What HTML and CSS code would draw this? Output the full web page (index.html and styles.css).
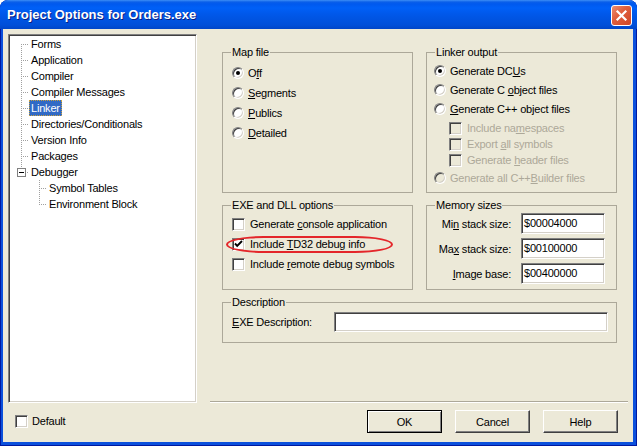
FILE: index.html
```html
<!DOCTYPE html>
<html lang="en">
<head>
  <meta charset="UTF-8">
  <title>Project Options for Orders.exe</title>
  <link rel="stylesheet" href="styles.css">
</head>
<body>
  <div class="window">
    <div class="titlebar">
      <span class="title">Project Options for Orders.exe</span>
      <span class="close">
        <svg width="13" height="13" viewBox="0 0 13 13"><path d="M2.5 2.5 L10.5 10.5 M10.5 2.5 L2.5 10.5" stroke="#fff" stroke-width="2.2" stroke-linecap="square"/></svg>
      </span>
    </div>
    <div class="client">
      <div class="main">
        <div class="tree">
          <div class="node"><span class="branch first"></span><span class="label">Forms</span></div>
          <div class="node"><span class="branch"></span><span class="label">Application</span></div>
          <div class="node"><span class="branch"></span><span class="label">Compiler</span></div>
          <div class="node"><span class="branch"></span><span class="label">Compiler Messages</span></div>
          <div class="node"><span class="branch"></span><span class="label selected">Linker</span></div>
          <div class="node"><span class="branch"></span><span class="label">Directories/Conditionals</span></div>
          <div class="node"><span class="branch"></span><span class="label">Version Info</span></div>
          <div class="node"><span class="branch"></span><span class="label">Packages</span></div>
          <div class="node"><span class="branch last open"><span class="toggle"></span></span><span class="label">Debugger</span></div>
          <div class="node"><span class="branch child"></span><span class="label">Symbol Tables</span></div>
          <div class="node"><span class="branch child last"></span><span class="label">Environment Block</span></div>
        </div>

        <div class="page">
          <div class="row">
            <fieldset class="group top map">
              <legend>Map file</legend>
              <div class="opt"><span class="radio on"></span><span>O<u>f</u>f</span></div>
              <div class="opt"><span class="radio"></span><span><u>S</u>egments</span></div>
              <div class="opt"><span class="radio"></span><span><u>P</u>ublics</span></div>
              <div class="opt"><span class="radio"></span><span><u>D</u>etailed</span></div>
            </fieldset>
            <fieldset class="group top linker">
              <legend>Linker output</legend>
              <div class="opt"><span class="radio on"></span><span>Generate DC<u>U</u>s</span></div>
              <div class="opt"><span class="radio"></span><span>Generate C <u>o</u>bject files</span></div>
              <div class="opt"><span class="radio"></span><span><u>G</u>enerate C++ object files</span></div>
              <div class="sub">
                <div class="opt small disabled"><span class="check"></span><span>Include na<u>m</u>espaces</span></div>
                <div class="opt small disabled"><span class="check"></span><span>Export <u>a</u>ll symbols</span></div>
                <div class="opt small disabled"><span class="check"></span><span>Generate <u>h</u>eader files</span></div>
              </div>
              <div class="opt disabled"><span class="radio"></span><span>Generate all C++<u>B</u>uilder files</span></div>
            </fieldset>
          </div>

          <div class="row">
            <fieldset class="group mid exe">
              <legend>EXE and DLL options</legend>
              <div class="opt"><span class="check"></span><span>Generate <u>c</u>onsole application</span></div>
              <div class="opt marked"><span class="check">
                <svg width="9" height="9" viewBox="0 0 9 9"><path d="M1 3.5 L3.2 5.8 L8 1" fill="none" stroke="#000" stroke-width="1.9"/></svg>
              </span><span>Include <u>T</u>D32 debug info</span></div>
              <div class="opt"><span class="check"></span><span>Include <u>r</u>emote debug symbols</span></div>
            </fieldset>
            <fieldset class="group mid memory">
              <legend>Memory sizes</legend>
              <div class="field"><span class="name">Mi<u>n</u> stack size:</span><span class="edit">$00004000</span></div>
              <div class="field"><span class="name">Ma<u>x</u> stack size:</span><span class="edit">$00100000</span></div>
              <div class="field"><span class="name"><u>I</u>mage base:</span><span class="edit">$00400000</span></div>
            </fieldset>
          </div>

          <fieldset class="group desc">
            <legend>Description</legend>
            <div class="field"><span class="name"><u>E</u>XE Description:</span><span class="edit wide"></span></div>
          </fieldset>
        </div>
      </div>

      <div class="footer">
        <div class="opt default"><span class="check"></span><span>Default</span></div>
        <div class="buttons">
          <span class="btn primary">OK</span>
          <span class="btn">Cancel</span>
          <span class="btn">Help</span>
        </div>
      </div>
    </div>
  </div>
</body>
</html>
```

FILE: styles.css
```css
body {
  margin: 0;
  font: 11px "Liberation Sans", Arial, sans-serif;
  letter-spacing: -0.2px;
  color: #000;
}
.window {
  width: 637px;
  height: 446px;
  box-sizing: border-box;
  display: flex;
  flex-direction: column;
  background: #0b50dc;
  border-radius: 8px 8px 0 0;
  box-shadow: inset 0 0 0 1px #0019a0;
}
.titlebar {
  height: 29px;
  flex: none;
  display: flex;
  align-items: center;
  padding: 0 5px 0 7px;
  border-radius: 8px 8px 0 0;
  background: linear-gradient(to bottom, #3d8ef6 0, #0a5fe9 2px, #0059ee 4px, #0060f7 8px, #0058ea 14px, #0053e0 20px, #004fd9 25px, #0045c8 29px);
}
.title {
  color: #fff;
  font: bold 13px "Liberation Sans", Arial, sans-serif;
  letter-spacing: 0;
  text-shadow: 1px 1px 0 #0b1f84;
}
.close {
  margin: 2px 0 0 auto;
  width: 21px;
  height: 21px;
  box-sizing: border-box;
  border: 1px solid #fff;
  border-radius: 3px;
  background: linear-gradient(135deg, #ec8f72 0, #e0603f 40%, #cf4526 100%);
  display: flex;
  align-items: center;
  justify-content: center;
}
.close svg {
  display: block;
}
.client {
  flex: 1;
  margin: 0 4px 4px 3px;
  background: #ece9d8;
  display: flex;
  flex-direction: column;
}
.main {
  display: flex;
  padding: 5px 0 0 5px;
}

/* tree */
.tree {
  width: 189px;
  height: 369px;
  box-sizing: border-box;
  background: #fff;
  border: 1px solid;
  border-color: #808080 #fff #fff #808080;
  box-shadow: inset 1px 1px 0 #404040, inset -1px -1px 0 #d4d0c8;
  padding-top: 1px;
}
.node {
  display: flex;
  align-items: center;
  height: 16px;
}
.branch {
  flex: none;
  width: 8px;
  height: 16px;
  margin-left: 12px;
  display: flex;
  align-items: center;
  background-image: repeating-linear-gradient(to bottom, #a0a0a0 0 1px, transparent 1px 2px), repeating-linear-gradient(to right, #a0a0a0 0 1px, transparent 1px 2px);
  background-size: 1px 16px, 8px 1px;
  background-position: 0 0, 0 8px;
  background-repeat: no-repeat;
}
.branch.first {
  background-size: 1px 8px, 8px 1px;
  background-position: 0 8px, 0 8px;
}
.branch.last {
  background-size: 1px 8px, 8px 1px;
  background-position: 0 0, 0 8px;
}
.branch.child {
  margin-left: 30px;
}
.toggle {
  width: 9px;
  height: 9px;
  box-sizing: border-box;
  margin-left: -4px;
  border: 1px solid #808080;
  background: #fff linear-gradient(#000, #000) center / 5px 1px no-repeat;
}
.label {
  padding: 0 2px;
  line-height: 16px;
  white-space: nowrap;
}
.label.selected {
  background: #316ac5;
  color: #fff;
  outline: 1px dotted #c8a040;
  outline-offset: -1px;
}

/* page */
.page {
  width: 418px;
  height: 368px;
  box-sizing: border-box;
  margin-left: 13px;
  padding: 12px 11px 0 12px;
  border-bottom: 1px solid #aca899;
  box-shadow: 0 1px 0 #fff;
}
.row {
  display: flex;
  gap: 13px;
  margin-bottom: 6px;
}
.group {
  margin: 0;
  width: 191px;
  box-sizing: border-box;
  padding: 0 8px;
  border: 1px solid #aca899;
  min-width: 0;
}
.group legend {
  padding: 0 1px;
  line-height: 13px;
}
.group.top {
  height: 147px;
}
.group.mid {
  height: 91px;
}
.group.desc {
  width: 395px;
  height: 47px;
}
.opt {
  display: flex;
  align-items: center;
  height: 20px;
  white-space: nowrap;
}
.map .opt {
  margin-left: 1px;
}
.map .opt:first-of-type {
  margin-top: 4px;
}
.linker .opt {
  height: 19px;
  margin-left: -1px;
}
.linker .opt:first-of-type {
  margin-top: 2px;
}
.linker .sub {
  margin: 0 0 0 15px;
}
.linker .opt.small {
  height: 16px;
}
.exe .opt {
  margin-left: 1px;
}
.exe .opt:first-of-type {
  margin-top: 2px;
}
.opt.disabled {
  color: #aca899;
}
.marked {
  position: relative;
}
.marked::after {
  content: "";
  position: absolute;
  left: -6px;
  top: 2px;
  width: 167px;
  height: 17px;
  box-sizing: border-box;
  border: 2px solid #e4262a;
  border-radius: 40px / 9px;
}

.radio {
  flex: none;
  width: 12px;
  height: 12px;
  box-sizing: border-box;
  margin-right: 4px;
  border-radius: 50%;
  border: 1px solid;
  border-color: #808080 #fff #fff #808080;
  box-shadow: inset 1px 1px 0 #404040, inset -1px -1px 0 #d4d0c8;
  background: #fff;
  display: flex;
  align-items: center;
  justify-content: center;
}
.radio.on::after {
  content: "";
  width: 4px;
  height: 4px;
  border-radius: 50%;
  background: #000;
}
.disabled .radio,
.disabled .check {
  background: #ece9d8;
}
.check {
  flex: none;
  width: 13px;
  height: 13px;
  box-sizing: border-box;
  margin-right: 5px;
  border: 1px solid;
  border-color: #808080 #fff #fff #808080;
  box-shadow: inset 1px 1px 0 #404040, inset -1px -1px 0 #d4d0c8;
  background: #fff;
  display: flex;
  align-items: center;
  justify-content: center;
}
.check svg {
  display: block;
}

/* edits */
.field {
  display: flex;
  align-items: center;
  gap: 10px;
  height: 21px;
  margin-bottom: 4px;
}
.memory .field:first-of-type {
  margin-top: 1px;
}
.memory .name {
  width: 76px;
  text-align: right;
  white-space: nowrap;
}
.edit {
  width: 84px;
  height: 21px;
  box-sizing: border-box;
  padding: 0 2px;
  line-height: 19px;
  background: #fff;
  border: 1px solid;
  border-color: #808080 #fff #fff #808080;
  box-shadow: inset 1px 1px 0 #404040, inset -1px -1px 0 #d4d0c8;
}
.desc .field {
  margin-top: 3px;
  height: 20px;
  gap: 0;
}
.desc .name {
  width: 102px;
  margin-left: 1px;
}
.edit.wide {
  width: 274px;
  height: 20px;
}

/* footer */
.footer {
  flex: 1;
  display: flex;
  align-items: flex-start;
  padding: 7px 15px 0 12px;
}
.default {
  margin-top: 1px;
  height: 20px;
}
.default .check {
  margin-right: 4px;
}
.buttons {
  margin-left: auto;
  display: flex;
  gap: 13px;
}
.btn {
  width: 75px;
  height: 23px;
  box-sizing: border-box;
  display: flex;
  align-items: center;
  justify-content: center;
  background: #ece9d8;
  border: 1px solid;
  border-color: #fff #404040 #404040 #fff;
  box-shadow: inset -1px -1px 0 #808080;
}
.btn.primary {
  border-color: #000;
  box-shadow: inset 1px 1px 0 #fff, inset -1px -1px 0 #808080;
}
```
